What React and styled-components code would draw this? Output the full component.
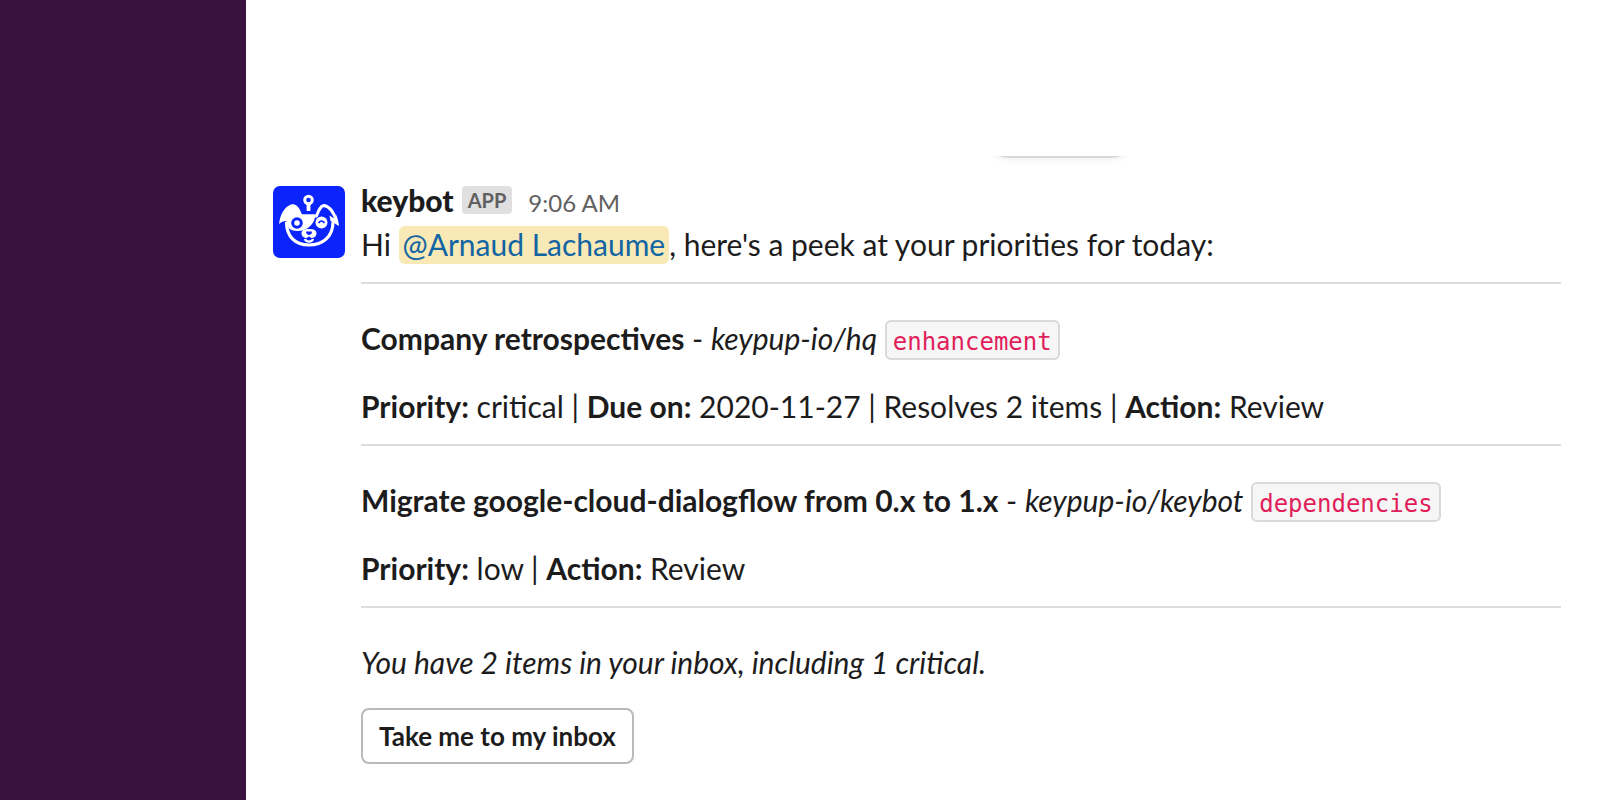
import React from "react";
import styled, { createGlobalStyle } from "styled-components";

const GlobalStyle = createGlobalStyle`
  * {
    box-sizing: border-box;
  }
  body {
    margin: 0;
    background-color: #fff;
    color: #1d1c1d;
    font-family: Lato, sans-serif;
    font-size: 30px;
    line-height: 44px;
  }
`;

const Container = styled.div`
  display: flex;
  min-height: 100vh;
`;

const Sidebar = styled.aside`
  flex: 0 0 246px;
  background-color: #39123e;
`;

const Main = styled.main`
  flex: 1;
  min-width: 0;
  padding-top: 156px;
`;

/* only the lower edge of the pill shows under the header */
const Divider = styled.div`
  display: flex;
  justify-content: flex-end;
  align-items: flex-start;
  height: 22px;
  padding-right: 462px;
  overflow: hidden;
`;

const DatePill = styled.div`
  width: 156px;
  height: 56px;
  margin-top: -54px;
  border: 2px solid #d6d6d6;
  border-radius: 28px;
  box-shadow: 0 2px 6px rgba(0, 0, 0, 0.06);
`;

const Message = styled.article`
  display: flex;
  gap: 16px;
  padding: 0 39px 36px 27px;
`;

const Avatar = styled.svg`
  flex: none;
  width: 72px;
  height: 72px;
  margin-top: 8px;
`;

const Body = styled.div`
  flex: 1;
  min-width: 0;
`;

const Header = styled.header`
  display: flex;
  align-items: baseline;
`;

const Name = styled.span`
  font-family: "Lato Black", Lato, sans-serif;
  font-weight: 900;
`;

const AppBadge = styled.span`
  align-self: center;
  margin: 0 16px 0 8px;
  padding: 0 6px;
  border-radius: 4px;
  background-color: #e0e0e0;
  color: #616061;
  font-size: 20px;
  font-weight: 700;
  line-height: 28px;
`;

const Time = styled.time`
  color: #616061;
  font-size: 24px;
  line-height: 28px;
`;

const Text = styled.p`
  margin: 0;
`;

const Mention = styled.a`
  padding: 0 4px 2px;
  border-radius: 6px;
  background-color: #f8e9b6;
  color: #1264a3;
  text-decoration: none;
`;

const Rule = styled.hr`
  height: 2px;
  margin: 16px 0;
  border: 0;
  background-color: #dddddd;
`;

const Section = styled.section`
  display: flex;
  flex-direction: column;
  align-items: flex-start;
  gap: 24px;
  padding-top: 16px;
`;

const Label = styled.code`
  padding: 6px 6px 2px;
  border: 2px solid #dadada;
  border-radius: 6px;
  background-color: #f6f6f6;
  color: #e01e5a;
  font-family: "DejaVu Sans Mono", monospace;
  font-size: 24px;
  line-height: 28px;
`;

const Button = styled.button`
  height: 56px;
  padding: 0 16px;
  border: 2px solid #bbbabb;
  border-radius: 8px;
  background-color: #fff;
  color: #1d1c1d;
  font-family: inherit;
  font-size: 26px;
  font-weight: 700;
  cursor: pointer;
`;

const items = [
  {
    title: "Company retrospectives",
    repo: "keypup-io/hq",
    label: "enhancement",
    details: (
      <>
        <b>Priority:</b> critical | <b>Due on:</b> 2020-11-27 | Resolves 2 items
        | <b>Action:</b> Review
      </>
    ),
  },
  {
    title: "Migrate google-cloud-dialogflow from 0.x to 1.x",
    repo: "keypup-io/keybot",
    label: "dependencies",
    details: (
      <>
        <b>Priority:</b> low | <b>Action:</b> Review
      </>
    ),
  },
];

const KeybotAvatar = () => (
  <Avatar viewBox="0 0 72 72" fill="none" role="img" aria-label="keybot">
    <rect width="72" height="72" rx="7" fill="#0b24fb" />
    <g stroke="#fff">
      <circle cx="35.500" cy="14" r="3.800" strokeWidth="3" />
      <path d="M35.500 18v7" strokeWidth="3.800" />
      <path
        d="M28 30h15.500c2-5 3.500-10 7.500-10.500 6 1 10 7 12.500 16"
        strokeWidth="3"
        strokeLinejoin="round"
      />
      <path
        d="M13.500 36c0 15 9 23 22.500 23S60 51 60 36"
        strokeWidth="3.200"
      />
    </g>
    <path d="M56.500 29.500l1 5.500 8.500 5c-.5-5-1.500-8-3-11.500l-2 4z" fill="#fff" />
    <path
      d="M6 38c1-9 5-17 12-19.500 5.500-1.500 8 3 11 10h13.500c-.5 9-8 16.500-18 16.500-4 0-7-1-9-3l-2.500-7c-2.500 0-5 1-7 3z"
      fill="#fff"
    />
    <circle
      cx="24"
      cy="37"
      r="4.300"
      fill="#fff"
      stroke="#0b24fb"
      strokeWidth="3"
    />
    <circle cx="48.500" cy="36.500" r="6" fill="#fff" />
    <path d="M45.500 37q3-4 6 0" stroke="#0b24fb" strokeWidth="1.600" />
    <path
      d="M36 43c5 0 7.500 1.500 7.500 4.300 0 3.200-2.500 4.700-5 4.700L36 50.500 33.500 52c-2.500 0-5-1.500-5-4.700 0-2.800 2.500-4.300 7.500-4.300z"
      fill="#fff"
    />
    <path d="M33 45.500h6c0 2-1 3.200-3 3.500-2-.3-3-1.500-3-3.500z" fill="#0b24fb" />
    <path d="M32 53c1 3.500 7 3.500 8 0" stroke="#fff" strokeWidth="2.400" />
  </Avatar>
);

const App = () => {
  return (
    <Container>
      <GlobalStyle />
      <Sidebar />
      <Main>
        <Divider>
          <DatePill />
        </Divider>
        <Message>
          <KeybotAvatar />
          <Body>
            <Header>
              <Name>keybot</Name>
              <AppBadge>APP</AppBadge>
              <Time>9:06 AM</Time>
            </Header>
            <Text>
              Hi <Mention href="#arnaud">@Arnaud Lachaume</Mention>, here's a
              peek at your priorities for today:
            </Text>
            <Rule />
            {items.map((item) => (
              <React.Fragment key={item.title}>
                <Section>
                  <Text>
                    <b>{item.title}</b> - <i>{item.repo}</i>{" "}
                    <Label>{item.label}</Label>
                  </Text>
                  <Text>{item.details}</Text>
                </Section>
                <Rule />
              </React.Fragment>
            ))}
            <Section>
              <Text>
                <i>You have 2 items in your inbox, including 1 critical.</i>
              </Text>
              <Button type="button">Take me to my inbox</Button>
            </Section>
          </Body>
        </Message>
      </Main>
    </Container>
  );
};

export default App;
